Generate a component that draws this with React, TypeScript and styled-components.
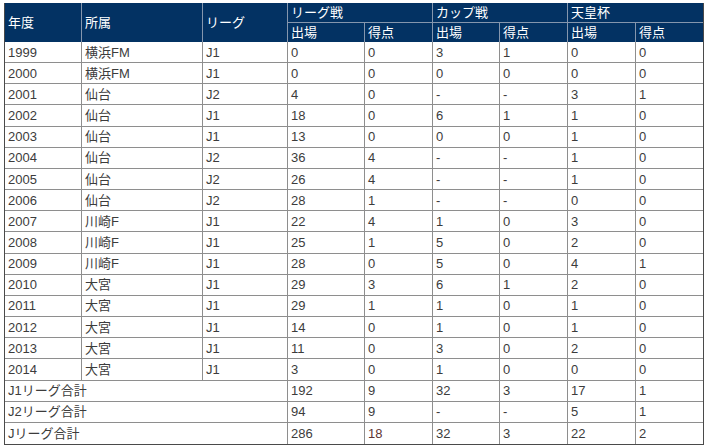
import React from "react";
import styled, { createGlobalStyle } from "styled-components";

const Global = createGlobalStyle`
  html, body { margin: 0; padding: 0; background: #fff; }
  body { font-family: "Liberation Sans", Arial, "Noto Sans CJK JP", sans-serif; }
`;

const Wrap = styled.div`
  padding: 3px 0 0 4px;
`;

const Table = styled.table`
  width: 699px;
  table-layout: fixed;
  border-collapse: separate;
  border-spacing: 0;
  border-left: 1px solid #4a4a4a;
  border-right: 1px solid #4a4a4a;
  border-bottom: 1px solid #4a4a4a;
  font-size: 13px;
`;

const Th = styled.th<{ $last?: boolean; $bottom?: boolean }>`
  background: #033263;
  color: #fff;
  font-weight: normal;
  text-align: left;
  padding: 0 0 0 3px;
  border-right: ${(p) => (p.$last ? "none" : "1px solid #8596ad")};
  border-bottom: ${(p) => (p.$bottom ? "1px solid #8596ad" : "none")};
  white-space: nowrap;
  overflow: hidden;
  line-height: 15px;
`;

const HeadRow = styled.tr<{ $h: number }>`
  height: ${(p) => p.$h}px;
`;

const Row = styled.tr`
  height: 21.16px;
  &:last-child td { border-bottom: none; }
`;

const Td = styled.td<{ $last?: boolean; $accent?: boolean }>`
  color: ${(p) => (p.$accent ? "#5e3434" : "#3c3c3c")};
  padding: 0 0 0 3px;
  border-right: ${(p) => (p.$last ? "none" : "1px solid #8e8e8e")};
  border-bottom: 1px solid #8e8e8e;
  white-space: nowrap;
  line-height: 15px;
`;

const widths = [77, 121, 85, 77, 68, 67, 68, 68, 67];

type R = [string, string, string, string, string, string, string, string, string];

const rows: R[] = [
  ["1999", "横浜FM", "J1", "0", "0", "3", "1", "0", "0"],
  ["2000", "横浜FM", "J1", "0", "0", "0", "0", "0", "0"],
  ["2001", "仙台", "J2", "4", "0", "-", "-", "3", "1"],
  ["2002", "仙台", "J1", "18", "0", "6", "1", "1", "0"],
  ["2003", "仙台", "J1", "13", "0", "0", "0", "1", "0"],
  ["2004", "仙台", "J2", "36", "4", "-", "-", "1", "0"],
  ["2005", "仙台", "J2", "26", "4", "-", "-", "1", "0"],
  ["2006", "仙台", "J2", "28", "1", "-", "-", "0", "0"],
  ["2007", "川崎F", "J1", "22", "4", "1", "0", "3", "0"],
  ["2008", "川崎F", "J1", "25", "1", "5", "0", "2", "0"],
  ["2009", "川崎F", "J1", "28", "0", "5", "0", "4", "1"],
  ["2010", "大宮", "J1", "29", "3", "6", "1", "2", "0"],
  ["2011", "大宮", "J1", "29", "1", "1", "0", "1", "0"],
  ["2012", "大宮", "J1", "14", "0", "1", "0", "1", "0"],
  ["2013", "大宮", "J1", "11", "0", "3", "0", "2", "0"],
  ["2014", "大宮", "J1", "3", "0", "1", "0", "0", "0"],
];

const totals: [string, string, string, string, string, string, string][] = [
  ["J1リーグ合計", "192", "9", "32", "3", "17", "1"],
  ["J2リーグ合計", "94", "9", "-", "-", "5", "1"],
  ["Jリーグ合計", "286", "18", "32", "3", "22", "2"],
];

export default function App() {
  return (
    <>
      <Global />
      <Wrap>
        <Table>
          <colgroup>
            {widths.map((w, i) => (
              <col key={i} style={{ width: w }} />
            ))}
          </colgroup>
          <thead>
            <HeadRow $h={20}>
              <Th rowSpan={2}>年度</Th>
              <Th rowSpan={2}>所属</Th>
              <Th rowSpan={2}>リーグ</Th>
              <Th colSpan={2} $bottom>リーグ戦</Th>
              <Th colSpan={2} $bottom>カップ戦</Th>
              <Th colSpan={2} $bottom $last>天皇杯</Th>
            </HeadRow>
            <HeadRow $h={19}>
              <Th>出場</Th>
              <Th>得点</Th>
              <Th>出場</Th>
              <Th>得点</Th>
              <Th>出場</Th>
              <Th $last>得点</Th>
            </HeadRow>
          </thead>
          <tbody>
            {rows.map((r) => (
              <Row key={r[0]}>
                {r.map((c, i) => (
                  <Td key={i} $last={i === 8}>
                    {c}
                  </Td>
                ))}
              </Row>
            ))}
            {totals.map((t) => (
              <Row key={t[0]}>
                <Td colSpan={3}>{t[0]}</Td>
                {t.slice(1).map((c, i) => (
                  <Td key={i} $last={i === 5} $accent={t[0] === "Jリーグ合計" && i === 1}>
                    {c}
                  </Td>
                ))}
              </Row>
            ))}
          </tbody>
        </Table>
      </Wrap>
    </>
  );
}
